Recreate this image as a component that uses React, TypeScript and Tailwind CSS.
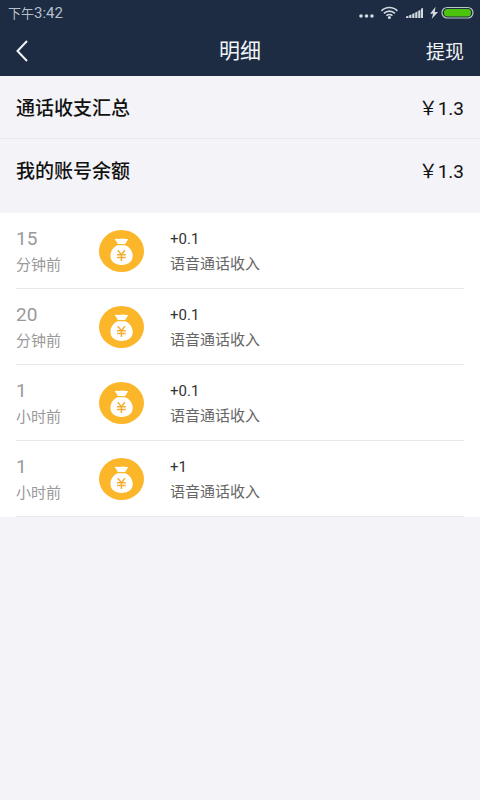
type Entry = {
  id: number;
  ago: string;
  unit: string;
  amount: string;
  label: string;
};

const summary = [
  { label: '通话收支汇总', value: '￥1.3' },
  { label: '我的账号余额', value: '￥1.3' },
];

const entries: Entry[] = [
  { id: 1, ago: '15', unit: '分钟前', amount: '+0.1', label: '语音通话收入' },
  { id: 2, ago: '20', unit: '分钟前', amount: '+0.1', label: '语音通话收入' },
  { id: 3, ago: '1', unit: '小时前', amount: '+0.1', label: '语音通话收入' },
  { id: 4, ago: '1', unit: '小时前', amount: '+1', label: '语音通话收入' },
];

function StatusIcons() {
  return (
    <svg width="116" height="18" viewBox="0 0 116 18" fill="#d3d9e0" aria-hidden="true">
      <circle cx="3" cy="12" r="1.8" />
      <circle cx="8.5" cy="12" r="1.8" />
      <circle cx="14" cy="12" r="1.8" />
      <g fill="none" stroke="#d3d9e0" strokeWidth="1.6">
        <path d="M23.4 6.900a11.2 11.2 0 0 1 16 0" />
        <path d="M25.900 9.400a7.800 7.800 0 0 1 11 0" />
        <path d="M28.400 11.800a4.300 4.300 0 0 1 6 0" />
      </g>
      <circle cx="31.4" cy="13.400" r="1.500" />
      <path d="M48 14v-1.500l2.400-.8V14zM51.200 14v-2.800l2.200-.8V14zM54.200 14V10l2.200-1V14zM57.200 14V8.400l2.200-1V14zM60.200 14V6.800l2.200-.9V14z" />
      <path d="M63 14V4.800l2-1V14z" />
      <path d="M77.600 2.800l-5.600 7h3.100l-1.400 5.200 6.300-7h-3.300z" />
      <rect x="84" y="3.500" width="31" height="10.500" rx="5.200" fill="none" stroke="#b9c8c0" strokeWidth="1.200" />
      <rect x="86" y="5" width="27" height="7.500" rx="3.500" fill="#4cc40c" />
    </svg>
  );
}

function MoneyBag() {
  return (
    <svg width="45" height="42" viewBox="0 0 45 42" aria-hidden="true">
      <ellipse cx="22.5" cy="21" rx="22.5" ry="21" fill="#fbb62a" />
      <path
        fill="#fff"
        d="M15.600 9c2.300-.7 4 .4 6.200-.2 2.400-.7 4.200.5 7.200.2-.6 2.200-2 3.600-3 4.900h-7.200c-.6-1.700-2-3.200-3.200-4.900z"
      />
      <path
        fill="#fff"
        d="M18.600 15.200h7.600c4.600 2 7.500 6 7.500 10.800 0 5.700-4.300 8.900-11 8.900s-11.200-3.200-11.200-8.900c0-4.800 2.500-8.800 7.100-10.800z"
      />
      <path
        fill="none"
        stroke="#f3ad35"
        strokeWidth="1.500"
        d="M18.800 20.200l3.600 4.400 3.600-4.400M18 24.800h8.800M18 27.600h8.800M22.400 24.500v6.500"
      />
    </svg>
  );
}

function EntryRow({ entry }: { entry: Entry }) {
  return (
    <li className="mx-4 flex h-[76px] items-center border-b border-[#e8e8ea]">
      <div className="w-[83px] shrink-0 pt-[3px] text-[#999]">
        <p className="text-[19px] leading-[26px]">{entry.ago}</p>
        <p className="text-[15px] leading-[26px]">{entry.unit}</p>
      </div>
      <MoneyBag />
      <div className="ml-[26px] min-w-0 flex-1 pt-[3px]">
        <p className="text-[15px] leading-[25px] text-[#333]">{entry.amount}</p>
        <p className="text-[15px] leading-[25px] text-[#666]">{entry.label}</p>
      </div>
    </li>
  );
}

export default function App() {
  return (
    <div className="min-h-screen bg-[#f3f3f8] font-[Roboto,'Noto_Sans_CJK_SC',sans-serif]">
      <header className="bg-[#1d2c42] text-[#f1f4f8]">
        <div className="flex h-[26px] items-center justify-between pl-2 pr-[6px]">
          <p className="text-[13px] leading-5 text-[#b7bfca]">
            下午<span className="text-[15px]">3:42</span>
          </p>
          <StatusIcons />
        </div>
        <div className="grid h-[50px] grid-cols-3 items-center px-4">
          <button type="button" aria-label="返回" className="justify-self-start">
            <svg width="12" height="22" viewBox="0 0 12 22" fill="none" stroke="currentColor" strokeWidth="2">
              <path d="M11 1L1.5 11L11 21" />
            </svg>
          </button>
          <h1 className="text-center text-[21px] leading-7">明细</h1>
          <button type="button" className="justify-self-end pt-[3px] text-[19px] leading-7">
            提现
          </button>
        </div>
      </header>

      <dl className="divide-y divide-[#e8e8ec] pb-[11px] text-[19px] leading-7 text-[#111]">
        {summary.map((item) => (
          <div key={item.label} className="flex h-[63px] items-center justify-between px-4 pt-[3px]">
            <dt className="font-medium">{item.label}</dt>
            <dd>{item.value}</dd>
          </div>
        ))}
      </dl>

      <ul className="bg-white">
        {entries.map((entry) => (
          <EntryRow key={entry.id} entry={entry} />
        ))}
      </ul>
    </div>
  );
}
